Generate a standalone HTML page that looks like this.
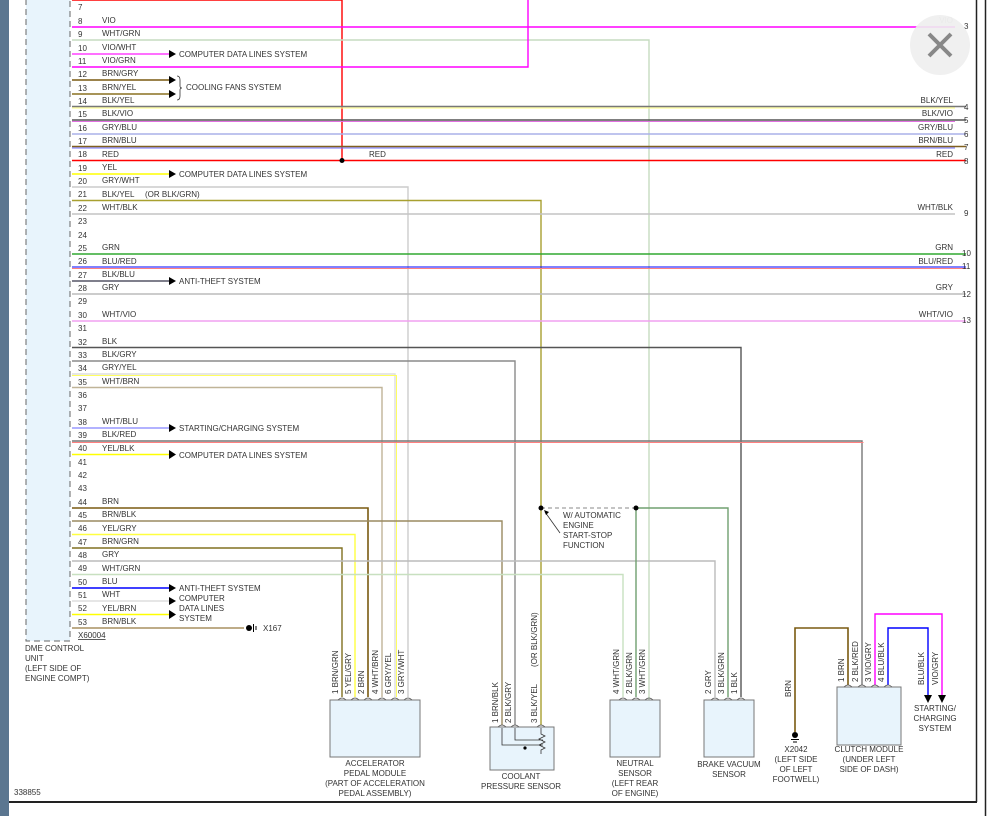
<!DOCTYPE html>
<html><head><meta charset="utf-8"><style>
html,body{margin:0;padding:0;background:#fff;width:991px;height:816px;overflow:hidden}
svg{display:block}
text{font-family:"Liberation Sans",sans-serif;font-size:8px;fill:#333}
.n{font-size:7.5px}
</style></head><body>
<svg width="991" height="816" viewBox="0 0 991 816" xmlns="http://www.w3.org/2000/svg">
<rect x="0" y="0" width="9" height="816" fill="#5b7690"/>
<line x1="9" y1="802" x2="977" y2="802" stroke="#222" stroke-width="2"/>
<line x1="976.5" y1="0" x2="976.5" y2="802" stroke="#222" stroke-width="1.5"/>
<line x1="985.5" y1="0" x2="985.5" y2="816" stroke="#222" stroke-width="1.5"/>
<!-- DME box -->
<rect x="26" y="-5" width="44" height="646" fill="#e8f4fc" stroke="#666" stroke-dasharray="6,4" stroke-width="1"/>
<g fill="none" stroke-width="1.4">
<!-- horizontal wires -->
<polyline points="72,0 342,0 342,160" stroke="#ff0000"/>
<line x1="72" y1="27" x2="955" y2="27" stroke="#ff00ff"/>
<polyline points="72,40 649,40 649,700" stroke="#c6dcc0"/>
<line x1="72" y1="54" x2="170" y2="54" stroke="#ff40ff"/>
<polyline points="72,67 528,67 528,0" stroke="#ff00ff"/>
<line x1="72" y1="80" x2="170" y2="80" stroke="#7a5a10"/>
<line x1="72" y1="94" x2="170" y2="94" stroke="#8a7020"/>
<line x1="72" y1="106.5" x2="966" y2="106.5" stroke="#777"/><line x1="72" y1="108" x2="955" y2="108" stroke="#ffff80" stroke-width="1"/>
<line x1="72" y1="120" x2="966" y2="120" stroke="#555"/><line x1="72" y1="121.5" x2="955" y2="121.5" stroke="#e070e0" stroke-width="1"/>
<line x1="72" y1="134" x2="966" y2="134" stroke="#aab0e8"/>
<line x1="72" y1="146.5" x2="966" y2="146.5" stroke="#806020"/><line x1="72" y1="148" x2="955" y2="148" stroke="#7070ff" stroke-width="1"/>
<line x1="72" y1="160.5" x2="966" y2="160.5" stroke="#ff0000" stroke-width="1.6"/>
<line x1="72" y1="174" x2="170" y2="174" stroke="#ffff00"/>
<polyline points="72,187 408,187 408,697" stroke="#cccccc"/>
<polyline points="72,200.5 541,200.5 541,725" stroke="#a8a030"/>
<line x1="72" y1="214" x2="955" y2="214" stroke="#c4c4c4"/>
<line x1="72" y1="254" x2="966" y2="254" stroke="#30a830"/>
<line x1="72" y1="267" x2="966" y2="267" stroke="#0000ff" stroke-width="1"/><line x1="72" y1="268.5" x2="966" y2="268.5" stroke="#ff8080" stroke-width="1"/>
<line x1="72" y1="281" x2="170" y2="281" stroke="#556"/>
<line x1="72" y1="294" x2="966" y2="294" stroke="#bbb"/>
<line x1="72" y1="321" x2="966" y2="321" stroke="#f0a0f0"/>
<polyline points="72,347.5 741,347.5 741,697" stroke="#555"/>
<polyline points="72,361 515,361 515,725" stroke="#8a8a8a"/>
<polyline points="72,374 395,374 395,697" stroke="#ddd"/><polyline points="72,375.5 396.5,375.5 396.5,697" stroke="#ffff60" stroke-width="1"/>
<polyline points="72,387.5 382,387.5 382,697" stroke="#c0b498"/>
<line x1="72" y1="428" x2="170" y2="428" stroke="#9898ff"/>
<polyline points="72,441 862,441 862,685" stroke="#777"/><polyline points="72,442.5 863.5,442.5" stroke="#ff8080" stroke-width="1"/>
<line x1="72" y1="454.5" x2="170" y2="454.5" stroke="#ffff00"/>
<polyline points="72,508 368,508 368,697" stroke="#7a5a10" stroke-width="1.6"/>
<polyline points="72,521 502,521 502,725" stroke="#9a8a60"/>
<polyline points="72,534.5 355,534.5 355,697" stroke="#ffff40"/>
<polyline points="72,548 342,548 342,697" stroke="#807020"/>
<polyline points="72,561 715,561 715,697" stroke="#bbb"/>
<polyline points="72,574.5 623,574.5 623,697" stroke="#c8e0c0"/>
<line x1="72" y1="588" x2="170" y2="588" stroke="#0000ff"/>
<line x1="72" y1="601" x2="170" y2="601" stroke="#ddd"/>
<line x1="72" y1="614.5" x2="170" y2="614.5" stroke="#ffff00"/>
<line x1="72" y1="628" x2="244" y2="628" stroke="#a89060"/>
<!-- dashed & green -->
<line x1="541" y1="508" x2="636" y2="508" stroke="#888" stroke-dasharray="4,3" stroke-width="1"/>
<polyline points="636,508 728,508 728,697" stroke="#70a070"/>
<line x1="636" y1="508" x2="636" y2="697" stroke="#70a070"/>
<!-- clutch wires -->
<polyline points="795,732 795,628 848,628 848,685" stroke="#7a5a10" stroke-width="1.6"/>
<polyline points="875,685 875,614 942,614 942,695" stroke="#ff00ff"/>
<polyline points="888,685 888,628 928,628 928,695" stroke="#0000ff"/>
<!-- arrow hint line -->
<line x1="545" y1="512" x2="560" y2="533" stroke="#333" stroke-width="0.8"/>
</g>
<!-- dots -->
<g fill="#000"><circle cx="342" cy="160.5" r="2.5"/><circle cx="541" cy="508" r="2.5"/><circle cx="636" cy="508" r="2.5"/></g>
<!-- arrows -->
<g fill="#000">
<polygon points="169,50 176,54 169,58"/>
<polygon points="169,76 176,80 169,84"/><polygon points="169,90 176,94 169,98"/>
<polygon points="169,170 176,174 169,178"/>
<polygon points="169,277 176,281 169,285"/>
<polygon points="169,424 176,428 169,432"/>
<polygon points="169,450 176,454.5 169,459"/>
<polygon points="169,584 176,588 169,592"/>
<polygon points="169,597 176,601 169,605"/>
<polygon points="169,610 176,614.5 169,619"/>
<polygon points="924,695 932,695 928,703"/><polygon points="938,695 946,695 942,703"/>
<polygon points="544,510 549,512 546,515"/>
</g>
<path d="M177,76 q3,0 3,4 v6 q0,2 2,2 q-2,0 -2,2 v6 q0,4 -3,4" fill="none" stroke="#333" stroke-width="0.8"/>
<!-- ground X167 -->
<circle cx="249" cy="628" r="3" fill="#000"/><line x1="253.5" y1="624" x2="253.5" y2="632" stroke="#000"/><line x1="256" y1="626" x2="256" y2="630" stroke="#000"/>
<text x="263" y="631">X167</text>
<!-- ground X2042 -->
<circle cx="795" cy="735" r="3" fill="#000"/><line x1="791" y1="739.5" x2="799" y2="739.5" stroke="#000"/><line x1="793" y1="742" x2="797" y2="742" stroke="#000"/>
<!-- pin numbers and labels -->
<g class="n">
<text x="78" y="10">7</text><text x="78" y="24">8</text><text x="78" y="37">9</text><text x="78" y="51">10</text><text x="78" y="64">11</text><text x="78" y="77">12</text><text x="78" y="91">13</text><text x="78" y="104">14</text><text x="78" y="117">15</text><text x="78" y="131">16</text><text x="78" y="144">17</text><text x="78" y="157">18</text><text x="78" y="171">19</text><text x="78" y="184">20</text><text x="78" y="197">21</text><text x="78" y="211">22</text><text x="78" y="224">23</text><text x="78" y="238">24</text><text x="78" y="251">25</text><text x="78" y="264">26</text><text x="78" y="278">27</text><text x="78" y="291">28</text><text x="78" y="304">29</text><text x="78" y="318">30</text><text x="78" y="331">31</text><text x="78" y="345">32</text><text x="78" y="358">33</text><text x="78" y="371">34</text><text x="78" y="385">35</text><text x="78" y="398">36</text><text x="78" y="411">37</text><text x="78" y="425">38</text><text x="78" y="438">39</text><text x="78" y="451">40</text><text x="78" y="465">41</text><text x="78" y="478">42</text><text x="78" y="491">43</text><text x="78" y="505">44</text><text x="78" y="518">45</text><text x="78" y="531">46</text><text x="78" y="545">47</text><text x="78" y="558">48</text><text x="78" y="571">49</text><text x="78" y="585">50</text><text x="78" y="598">51</text><text x="78" y="611">52</text><text x="78" y="625">53</text>
</g>
<g>
<text x="102" y="23">VIO</text><text x="102" y="36">WHT/GRN</text><text x="102" y="50">VIO/WHT</text><text x="102" y="63">VIO/GRN</text><text x="102" y="76">BRN/GRY</text><text x="102" y="90">BRN/YEL</text><text x="102" y="103">BLK/YEL</text><text x="102" y="116">BLK/VIO</text><text x="102" y="130">GRY/BLU</text><text x="102" y="143">BRN/BLU</text><text x="102" y="157">RED</text><text x="102" y="170">YEL</text><text x="102" y="183">GRY/WHT</text><text x="102" y="197">BLK/YEL</text><text x="145" y="197">(OR BLK/GRN)</text><text x="102" y="210">WHT/BLK</text><text x="102" y="250">GRN</text><text x="102" y="264">BLU/RED</text><text x="102" y="277">BLK/BLU</text><text x="102" y="290">GRY</text><text x="102" y="317">WHT/VIO</text><text x="102" y="344">BLK</text><text x="102" y="357">BLK/GRY</text><text x="102" y="370">GRY/YEL</text><text x="102" y="384">WHT/BRN</text><text x="102" y="424">WHT/BLU</text><text x="102" y="437">BLK/RED</text><text x="102" y="451">YEL/BLK</text><text x="102" y="504">BRN</text><text x="102" y="517">BRN/BLK</text><text x="102" y="531">YEL/GRY</text><text x="102" y="544">BRN/GRN</text><text x="102" y="557">GRY</text><text x="102" y="571">WHT/GRN</text><text x="102" y="584">BLU</text><text x="102" y="597">WHT</text><text x="102" y="611">YEL/BRN</text><text x="102" y="624">BRN/BLK</text>
<text x="179" y="57">COMPUTER DATA LINES SYSTEM</text>
<text x="186" y="90">COOLING FANS SYSTEM</text>
<text x="179" y="177">COMPUTER DATA LINES SYSTEM</text>
<text x="179" y="284">ANTI-THEFT SYSTEM</text>
<text x="179" y="431">STARTING/CHARGING SYSTEM</text>
<text x="179" y="458">COMPUTER DATA LINES SYSTEM</text>
<text x="179" y="591">ANTI-THEFT SYSTEM</text>
<text x="179" y="601">COMPUTER</text><text x="179" y="611">DATA LINES</text><text x="179" y="621">SYSTEM</text>
<text x="369" y="157">RED</text>
<text x="78" y="638" text-decoration="underline">X60004</text>
<text x="25" y="651">DME CONTROL</text><text x="25" y="661">UNIT</text><text x="25" y="671">(LEFT SIDE OF</text><text x="25" y="681">ENGINE COMPT)</text>
<text x="14" y="795">338855</text>
<text x="563" y="518">W/ AUTOMATIC</text><text x="563" y="528">ENGINE</text><text x="563" y="538">START-STOP</text><text x="563" y="548">FUNCTION</text>
</g>
<!-- right labels -->
<g text-anchor="end">
<text x="953" y="23" fill="#bbb" style="fill:#bbb">VIO</text>
<text x="953" y="103">BLK/YEL</text><text x="953" y="116">BLK/VIO</text><text x="953" y="130">GRY/BLU</text><text x="953" y="143">BRN/BLU</text><text x="953" y="157">RED</text><text x="953" y="210">WHT/BLK</text><text x="953" y="250">GRN</text><text x="953" y="264">BLU/RED</text><text x="953" y="290">GRY</text><text x="953" y="317">WHT/VIO</text>
</g>
<g class="n">
<text x="964" y="29">3</text><text x="964" y="110">4</text><text x="964" y="123">5</text><text x="964" y="137">6</text><text x="964" y="150">7</text><text x="964" y="164">8</text><text x="964" y="216">9</text><text x="962" y="256">10</text><text x="962" y="269">11</text><text x="962" y="297">12</text><text x="962" y="323">13</text>
</g>
<!-- close button -->
<circle cx="940" cy="45" r="30" fill="#eeeeee" opacity="0.9"/>
<path d="M929,34 L951,56 M951,34 L929,56" stroke="#888" stroke-width="4"/>
<!-- components -->
<g fill="#e8f4fc" stroke="#777" stroke-width="1">
<rect x="330" y="700" width="90" height="57"/>
<rect x="490" y="727" width="64" height="43"/>
<rect x="610" y="700" width="50" height="57"/>
<rect x="704" y="700" width="50" height="57"/>
<rect x="837" y="687" width="64" height="58"/>
</g>
<path d="M502,728 v17 h41 M515,728 v12 h28 M541,728 v6 l4,2 -6,3 6,3 -6,3 6,3 -4,2 v4" fill="none" stroke="#333" stroke-width="0.8"/>
<circle cx="525" cy="748" r="1.6" fill="#000"/>
<!-- connector chevrons -->
<g fill="none" stroke="#555" stroke-width="0.8">
<path d="M338,700 q4,-4 8,0 M351,700 q4,-4 8,0 M364,700 q4,-4 8,0 M378,700 q4,-4 8,0 M391,700 q4,-4 8,0 M404,700 q4,-4 8,0"/>
<path d="M498,727 q4,-4 8,0 M511,727 q4,-4 8,0 M537,727 q4,-4 8,0"/>
<path d="M619,700 q4,-4 8,0 M632,700 q4,-4 8,0 M645,700 q4,-4 8,0"/>
<path d="M711,700 q4,-4 8,0 M724,700 q4,-4 8,0 M737,700 q4,-4 8,0"/>
<path d="M844,687 q4,-4 8,0 M858,687 q4,-4 8,0 M871,687 q4,-4 8,0 M884,687 q4,-4 8,0"/>
</g>
<!-- vertical labels -->
<g>
<text transform="translate(338,694) rotate(-90)">1  BRN/GRN</text>
<text transform="translate(351,694) rotate(-90)">5  YEL/GRY</text>
<text transform="translate(364,694) rotate(-90)">2  BRN</text>
<text transform="translate(378,694) rotate(-90)">4  WHT/BRN</text>
<text transform="translate(391,694) rotate(-90)">6  GRY/YEL</text>
<text transform="translate(404,694) rotate(-90)">3  GRY/WHT</text>
<text transform="translate(498,723) rotate(-90)">1  BRN/BLK</text>
<text transform="translate(511,723) rotate(-90)">2  BLK/GRY</text>
<text transform="translate(537,723) rotate(-90)">3  BLK/YEL</text>
<text transform="translate(537,667) rotate(-90)">(OR BLK/GRN)</text>
<text transform="translate(619,694) rotate(-90)">4  WHT/GRN</text>
<text transform="translate(632,694) rotate(-90)">2  BLK/GRN</text>
<text transform="translate(645,694) rotate(-90)">3  WHT/GRN</text>
<text transform="translate(711,694) rotate(-90)">2  GRY</text>
<text transform="translate(724,694) rotate(-90)">3  BLK/GRN</text>
<text transform="translate(737,694) rotate(-90)">1  BLK</text>
<text transform="translate(791,697) rotate(-90)">BRN</text>
<text transform="translate(844,682) rotate(-90)">1  BRN</text>
<text transform="translate(858,682) rotate(-90)">2  BLK/RED</text>
<text transform="translate(871,682) rotate(-90)">3  VIO/GRY</text>
<text transform="translate(884,682) rotate(-90)">4  BLU/BLK</text>
<text transform="translate(924,685) rotate(-90)">BLU/BLK</text>
<text transform="translate(938,685) rotate(-90)">VIO/GRY</text>
</g>
<g text-anchor="middle">
<text x="375" y="766">ACCELERATOR</text><text x="375" y="776">PEDAL MODULE</text><text x="375" y="786">(PART OF ACCELERATION</text><text x="375" y="796">PEDAL ASSEMBLY)</text>
<text x="521" y="779">COOLANT</text><text x="521" y="789">PRESSURE SENSOR</text>
<text x="635" y="766">NEUTRAL</text><text x="635" y="776">SENSOR</text><text x="635" y="786">(LEFT REAR</text><text x="635" y="796">OF ENGINE)</text>
<text x="729" y="767">BRAKE VACUUM</text><text x="729" y="777">SENSOR</text>
<text x="796" y="752">X2042</text><text x="796" y="762">(LEFT SIDE</text><text x="796" y="772">OF LEFT</text><text x="796" y="782">FOOTWELL)</text>
<text x="869" y="752">CLUTCH MODULE</text><text x="869" y="762">(UNDER LEFT</text><text x="869" y="772">SIDE OF DASH)</text>
<text x="935" y="711">STARTING/</text><text x="935" y="721">CHARGING</text><text x="935" y="731">SYSTEM</text>
</g>
</svg>
</body></html>
